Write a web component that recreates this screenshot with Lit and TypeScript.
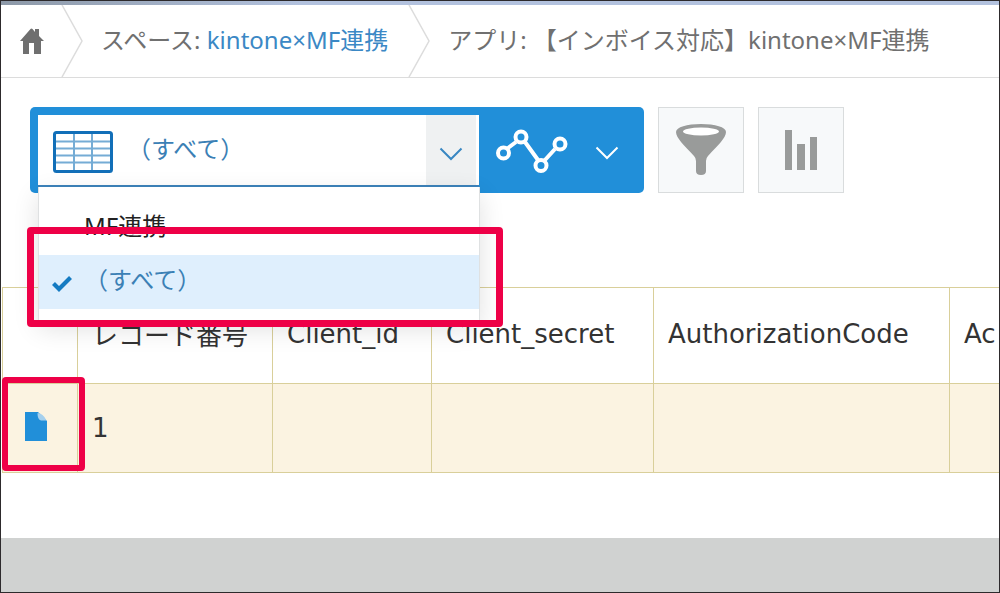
import { LitElement, html, css } from "lit";
import { customElement, property, state } from "lit/decorators.js";

@customElement("view-picker")
class ViewPicker extends LitElement {
  @property({ type: Array }) views: string[] = [];
  @state() private current = "（すべて）";

  static styles = css`
    :host { display: block; flex: 0 1 614px; min-width: 0; }
    .bar {
      position: relative; display: flex; height: 86px; box-sizing: border-box;
      padding: 8px 0 6px 8px; background: #218fd9; border-radius: 5px;
    }
    .field {
      flex: 1; min-width: 0; display: flex; align-items: center; position: relative;
      background: #fff; border-bottom: 2px solid #3d83bb;
    }
    .grid { flex: none; margin: 4px 0 0 15px; }
    select {
      flex: 1; min-width: 0; height: 68px; padding: 0 60px 4px 14px; margin: 0;
      appearance: none; border: 0; background: transparent; color: #3b80b5;
      font: inherit; cursor: pointer;
    }
    .toggle {
      position: absolute; right: 3px; top: 0; bottom: 0; width: 50px;
      display: grid; place-items: center; background: #eff1f2; pointer-events: none;
      padding-top: 8px; box-sizing: border-box;
    }
    .graph {
      flex: 0 0 165px; display: flex; align-items: center; gap: 27px;
      padding: 0 0 0 17px; border: 0; background: transparent; color: #fff; cursor: pointer;
    }
    .graph svg { flex: none; }
    .graph .chev { margin-top: 4px; }
    .menu {
      position: absolute; z-index: 2; left: 8px; right: 164px; top: 80px;
      margin: 0; padding: 14px 0 12px; list-style: none; background: #fff;
      border: solid #dfe1e2; border-width: 0 1px;
      box-shadow: 0 8px 24px rgba(0, 0, 0, 0.12);
    }
    .item { position: relative; }
    .item button {
      display: flex; align-items: center; width: 100%; height: 54px; padding: 0 0 8px 12px;
      border: 0; background: transparent; color: #222; font: inherit; text-align: left; cursor: pointer;
    }
    .item .on { background: #dfeffd; color: #3b80b5; }
    .mark { flex: none; width: 33px; display: flex; padding-top: 12px; }
    .frame {
      position: absolute; inset: -28px -24px -18px -12px; pointer-events: none;
      border: 7px solid #ee0047; border-radius: 4px;
    }
  `;

  render() {
    return html`
      <div class="bar">
        <div class="field">
          <svg class="grid" width="60" height="42" viewBox="0 0 60 42" aria-hidden="true">
            <rect x="2" y="2" width="56" height="38" rx="2" fill="#fff" />
            <path d="M3 10.5H57M3 17.5H57M3 24.5H57M3 31.5H57M21 3V39M39 3V39" stroke="#75acd5" stroke-width="2" />
            <rect x="1.5" y="1.5" width="57" height="39" rx="2" fill="none" stroke="#126fb8" stroke-width="3" />
          </svg>
          <select aria-label="一覧" @change=${(e: Event) => (this.current = (e.target as HTMLSelectElement).value)}>
            ${this.views.map((v) => html`<option ?selected=${v === this.current}>${v}</option>`)}
          </select>
          <span class="toggle">
            <svg width="24" height="14" viewBox="0 0 24 14"><path d="M1.5 1.5L12 12L22.5 1.5" fill="none" stroke="#3987c2" stroke-width="2" /></svg>
          </span>
        </div>
        <button class="graph" aria-label="グラフ">
          <svg width="72" height="46" viewBox="0 0 72 46" fill="none" stroke="#fff" stroke-width="4">
            <path d="M12 20L20 14M29 14L42 32M49 32L59 21" />
            <circle cx="7.5" cy="25" r="5.500" />
            <circle cx="25" cy="9" r="5.500" />
            <circle cx="45" cy="37.500" r="5.500" />
            <circle cx="64" cy="16" r="5.500" />
          </svg>
          <svg class="chev" width="24" height="14" viewBox="0 0 24 14"><path d="M1.5 1.5L12 12L22.5 1.5" fill="none" stroke="#fff" stroke-width="2" /></svg>
        </button>
        <ul class="menu">
          ${this.views.map((v) => {
            const on = v === this.current;
            return html`<li class="item">
              <button class=${on ? "on" : ""} @click=${() => (this.current = v)}>
                <span class="mark">
                  ${on
                    ? html`<svg width="22" height="18" viewBox="0 0 22 18"><path d="M2.500 8.500L8 14L19.500 2.500" fill="none" stroke="#157bc2" stroke-width="4.200" /></svg>`
                    : ""}
                </span>${v}
              </button>
              ${on ? html`<span class="frame"></span>` : ""}
            </li>`;
          })}
        </ul>
      </div>
    `;
  }
}

@customElement("record-table")
class RecordTable extends LitElement {
  @property({ type: Array }) fields: string[] = [];

  static styles = css`
    :host { display: block; font-family: "DejaVu Sans", "Noto Sans CJK JP", sans-serif; font-size: 26px; }
    table { width: 100%; table-layout: fixed; border-collapse: collapse; color: #333; }
    .c0 { width: 75px; } .c1 { width: 195px; } .c2 { width: 159px; }
    .c3 { width: 222px; } .c4 { width: 296px; }
    th, td {
      box-sizing: border-box; border: 1px solid #d9cf9a; padding: 0 0 0 14px;
      text-align: left; font-weight: 400; white-space: nowrap;
    }
    th:last-child, td:last-child { border-right: 0; }
    th { height: 96px; padding-bottom: 4px; }
    td { height: 89px; background: #fbf3e1; }
    .open { position: relative; padding: 0 0 4px; }
    .open a { display: block; width: 22px; height: 29px; margin-left: 22px; }
    .open svg { display: block; }
    .frame {
      position: absolute; inset: -7px -8px 1px -1px; pointer-events: none;
      border: 6px solid #ee0047; border-radius: 4px;
    }
  `;

  render() {
    return html`
      <table>
        <colgroup>
          <col class="c0" /><col class="c1" /><col class="c2" /><col class="c3" /><col class="c4" /><col />
        </colgroup>
        <thead>
          <tr><th></th>${this.fields.map((f) => html`<th>${f}</th>`)}</tr>
        </thead>
        <tbody>
          <tr>
            <td class="open">
              <a href="#1" aria-label="1">
                <svg width="22" height="29" viewBox="0 0 22 29">
                  <path d="M0 0H13L22 9V29H0Z" fill="#218fd9" />
                  <path d="M12.500 1Q18 1 21.500 8.500H16Q12.500 8 12.500 1Z" fill="#a5d0ee" />
                </svg>
              </a>
              <span class="frame"></span>
            </td>
            <td>1</td><td></td><td></td><td></td><td></td>
          </tr>
        </tbody>
      </table>
    `;
  }
}

@customElement("app-root")
class AppRoot extends LitElement {
  static styles = css`
    :host {
      display: flex; flex-direction: column; box-sizing: border-box; min-height: 100vh;
      border: 1px solid #2d2a2c; background: #fff; overflow: hidden;
      font-family: "Noto Sans", "Noto Sans CJK JP", sans-serif; font-size: 24px; color: #707070;
    }
    .strip { height: 4px; background: linear-gradient(90deg, #8d99a8, #b3c2de 30%, #b3c2de); }
    .crumbs {
      display: flex; align-items: center; height: 73px; box-sizing: border-box;
      border-bottom: 1px solid #dcdcdc; white-space: nowrap;
    }
    .home { display: flex; margin: 0 17px 0 19px; }
    .crumb { padding: 0 20px 2px 18px; line-height: 36px; }
    .crumb.last { flex: 1; min-width: 0; padding-right: 0; overflow: hidden; }
    .crumb a { color: #3b88c5; text-decoration: none; }
    .sep { flex: none; }
    .tools { display: flex; gap: 14px; padding: 29px 29px 94px; }
    .tool {
      flex: none; width: 86px; height: 86px; padding: 0; display: grid; place-items: center;
      background: #f7f9fa; border: 1px solid #d9dcdd; cursor: pointer;
    }
    .records { padding: 0 0 65px 1px; }
    .foot { flex: 1; min-height: 54px; background: #d0d2d1; }
  `;

  private separator() {
    return html`<svg class="sep" width="22" height="72" viewBox="0 0 22 72" aria-hidden="true">
      <path d="M1 0L21 36L1 72" fill="none" stroke="#dcdcdc" stroke-width="1.500" />
    </svg>`;
  }

  render() {
    return html`
      <div class="strip"></div>
      <nav class="crumbs">
        <a class="home" href="#home" aria-label="ホーム">
          <svg width="24" height="26" viewBox="0 0 24 26">
            <path d="M0 13L10.500 1Q11.500 0 12.500 1L15 4V1H19V8L24 13H21V26H14V15H9V26H3V13Z" fill="#6f6f6f" />
          </svg>
        </a>
        ${this.separator()}
        <span class="crumb">スペース: <a href="#space">kintone×MF連携</a></span>
        ${this.separator()}
        <span class="crumb last">アプリ: 【インボイス対応】kintone×MF連携</span>
      </nav>
      <div class="tools">
        <view-picker .views=${["MF連携", "（すべて）"]}></view-picker>
        <button class="tool" aria-label="絞り込む">
          <svg width="50" height="52" viewBox="0 0 50 52">
            <path d="M0 8C0 3 11 0 25 0S50 3 50 8C50 14 42 21 32 32Q30 34 30 37V47Q30 51 25 51T20 47V37Q20 34 18 32C8 21 0 14 0 8Z" fill="#999b9a" />
            <ellipse cx="25" cy="7.500" rx="18" ry="4" fill="#fff" />
          </svg>
        </button>
        <button class="tool" aria-label="集計する">
          <svg width="32" height="40" viewBox="0 0 32 40" fill="#999b9a">
            <rect width="7" height="40" /><rect x="12" y="14" width="8" height="26" /><rect x="25" y="7" width="7" height="33" />
          </svg>
        </button>
      </div>
      <div class="records">
        <record-table .fields=${["レコード番号", "Client_id", "Client_secret", "AuthorizationCode", "Ac"]}></record-table>
      </div>
      <footer class="foot"></footer>
    `;
  }
}
